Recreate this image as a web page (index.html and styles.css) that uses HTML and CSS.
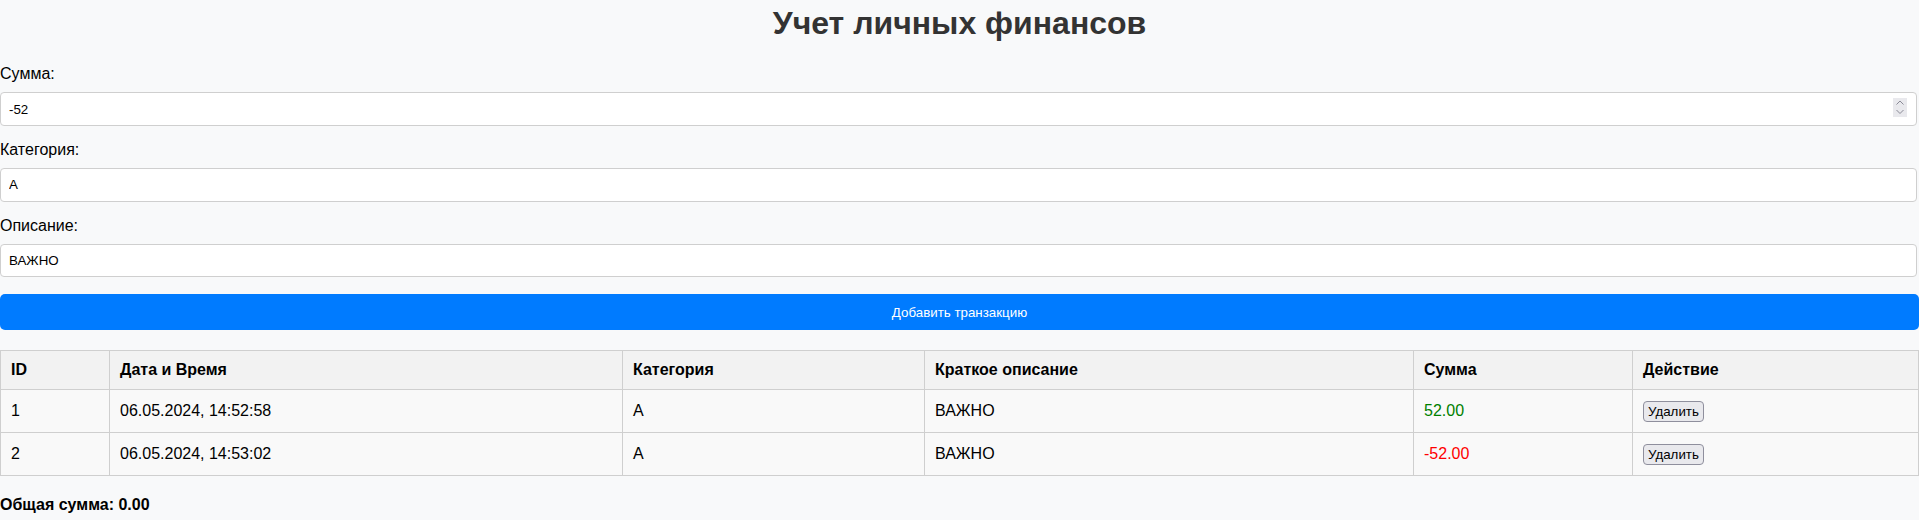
FILE: index.html
```html
<!DOCTYPE html>
<html lang="ru">
<head>
<meta charset="utf-8">
<title>Учет личных финансов</title>
<link rel="stylesheet" href="styles.css">
</head>
<body>
<div class="app">
  <h1 class="title">Учет личных финансов</h1>

  <div class="field">
    <label class="label" for="amount">Сумма:</label>
    <div class="num-wrap">
      <input class="input input-num" type="number" id="amount" value="-52">
      <span class="spin" aria-hidden="true">
        <svg width="14" height="19" viewBox="0 0 14 19">
          <polyline points="3.5,6.5 7,3 10.5,6.5" fill="none" stroke="#8a8a96" stroke-width="1"/>
          <polyline points="3.5,12 7,15.5 10.5,12" fill="none" stroke="#8a8a96" stroke-width="1"/>
        </svg>
      </span>
    </div>
  </div>

  <div class="field">
    <label class="label" for="category">Категория:</label>
    <input class="input" type="text" id="category" value="А">
  </div>

  <div class="field">
    <label class="label" for="desc">Описание:</label>
    <input class="input" type="text" id="desc" value="ВАЖНО">
  </div>

  <button class="add-btn" type="button">Добавить транзакцию</button>

  <table class="tx-table">
    <colgroup>
      <col class="c-id">
      <col class="c-date">
      <col class="c-cat">
      <col class="c-desc">
      <col class="c-sum">
      <col class="c-act">
    </colgroup>
    <thead>
      <tr>
        <th>ID</th>
        <th>Дата и Время</th>
        <th>Категория</th>
        <th>Краткое описание</th>
        <th>Сумма</th>
        <th>Действие</th>
      </tr>
    </thead>
    <tbody>
      <tr>
        <td>1</td>
        <td>06.05.2024, 14:52:58</td>
        <td>А</td>
        <td>ВАЖНО</td>
        <td class="pos">52.00</td>
        <td><button class="del-btn" type="button">Удалить</button></td>
      </tr>
      <tr>
        <td>2</td>
        <td>06.05.2024, 14:53:02</td>
        <td>А</td>
        <td>ВАЖНО</td>
        <td class="neg">-52.00</td>
        <td><button class="del-btn" type="button">Удалить</button></td>
      </tr>
    </tbody>
  </table>

  <p class="total">Общая сумма: 0.00</p>
</div>
</body>
</html>
```

FILE: styles.css
```css
html, body {
  margin: 0;
  padding: 0;
}

body {
  background: #f8f9fa;
  font-family: "Liberation Sans", Arial, sans-serif;
  font-size: 16px;
  color: #000;
}

.app {
  display: flex;
  flex-direction: column;
}

.title {
  margin: 5px 0 23px;
  font-size: 32px;
  font-weight: bold;
  line-height: 37px;
  color: #333;
  text-align: center;
}

.field {
  display: flex;
  flex-direction: column;
  margin-bottom: 15px;
}

.label {
  display: block;
  margin-bottom: 9px;
  line-height: 18.4px;
}

.num-wrap {
  position: relative;
}

.input {
  display: block;
  box-sizing: border-box;
  width: calc(100% - 2px);
  height: 33.4px;
  margin: 0;
  padding: 0 8px;
  border: 1px solid #cfcfcf;
  border-radius: 4px;
  background: #fff;
  font-family: "Liberation Sans", Arial, sans-serif;
  font-size: 13.333px;
  color: #000;
  outline: none;
}

.input-num {
  -moz-appearance: textfield;
  appearance: textfield;
}

.input-num::-webkit-inner-spin-button,
.input-num::-webkit-outer-spin-button {
  -webkit-appearance: none;
  margin: 0;
}

.spin {
  position: absolute;
  right: 12px;
  top: 6px;
  width: 14px;
  height: 19px;
  background: #e9e9ed;
  display: flex;
}

.add-btn {
  margin-top: 2px;
  width: 100%;
  height: 35.4px;
  padding: 0 10px;
  border: none;
  border-radius: 5px;
  background: #007bff;
  color: #fff;
  font-family: "Liberation Sans", Arial, sans-serif;
  font-size: 13.333px;
}

.tx-table {
  margin-top: 20px;
  width: 100%;
  border-collapse: collapse;
  table-layout: fixed;
}

.c-id { width: 109px; }
.c-date { width: 513px; }
.c-cat { width: 302px; }
.c-desc { width: 489px; }
.c-sum { width: 219px; }

.tx-table th,
.tx-table td {
  border: 1px solid #cfcfcf;
  padding: 10px;
  text-align: left;
  line-height: 18.4px;
}

.tx-table th {
  background: #f2f2f2;
  font-weight: bold;
}

.tx-table td {
  height: 22px;
  background: #f9f9f9;
}

.pos { color: green; }
.neg { color: red; }

.del-btn {
  height: 21px;
  padding: 0 4px;
  border: 1px solid #8f8f9d;
  border-radius: 4px;
  background: #e9e9ed;
  color: #000;
  font-family: "Liberation Sans", Arial, sans-serif;
  font-size: 13.333px;
  vertical-align: middle;
}

.total {
  margin: 20px 0 0;
  font-weight: bold;
  line-height: 18.4px;
}
```
